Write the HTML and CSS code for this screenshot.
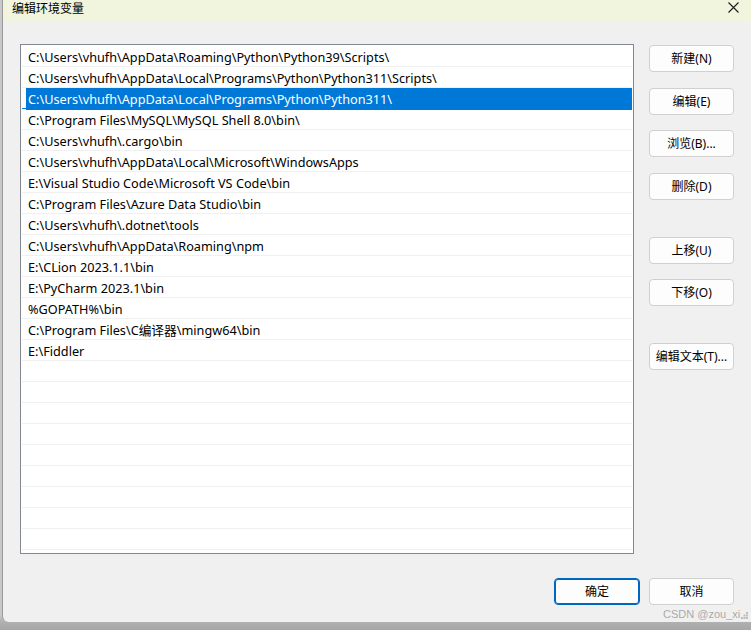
FILE: index.html
```html
<!DOCTYPE html>
<html lang="zh-CN">
<head>
<meta charset="utf-8">
<title>编辑环境变量</title>
<link rel="stylesheet" href="styles.css">
</head>
<body>
<div class="window">
  <div class="titlebar">
    <span class="title">编辑环境变量</span>
    <svg class="close" width="11" height="11" viewBox="0 0 11 11"><path d="M0.5 0.5 L10.5 10.5 M10.5 0.5 L0.5 10.5" stroke="#1a1a1a" stroke-width="1.1" fill="none"/></svg>
  </div>
  <div class="main">
    <div class="list">
      <div class="row"><span class="cell">C:\Users\vhufh\AppData\Roaming\Python\Python39\Scripts\</span></div>
      <div class="row"><span class="cell">C:\Users\vhufh\AppData\Local\Programs\Python\Python311\Scripts\</span></div>
      <div class="row selected"><span class="cell">C:\Users\vhufh\AppData\Local\Programs\Python\Python311\</span></div>
      <div class="row"><span class="cell">C:\Program Files\MySQL\MySQL Shell 8.0\bin\</span></div>
      <div class="row"><span class="cell">C:\Users\vhufh\.cargo\bin</span></div>
      <div class="row"><span class="cell">C:\Users\vhufh\AppData\Local\Microsoft\WindowsApps</span></div>
      <div class="row"><span class="cell">E:\Visual Studio Code\Microsoft VS Code\bin</span></div>
      <div class="row"><span class="cell">C:\Program Files\Azure Data Studio\bin</span></div>
      <div class="row"><span class="cell">C:\Users\vhufh\.dotnet\tools</span></div>
      <div class="row"><span class="cell">C:\Users\vhufh\AppData\Roaming\npm</span></div>
      <div class="row"><span class="cell">E:\CLion 2023.1.1\bin</span></div>
      <div class="row"><span class="cell">E:\PyCharm 2023.1\bin</span></div>
      <div class="row"><span class="cell">%GOPATH%\bin</span></div>
      <div class="row"><span class="cell">C:\Program Files\C编译器\mingw64\bin</span></div>
      <div class="row"><span class="cell">E:\Fiddler</span></div>
      <div class="row"><span class="cell"></span></div>
      <div class="row"><span class="cell"></span></div>
      <div class="row"><span class="cell"></span></div>
      <div class="row"><span class="cell"></span></div>
      <div class="row"><span class="cell"></span></div>
      <div class="row"><span class="cell"></span></div>
      <div class="row"><span class="cell"></span></div>
      <div class="row"><span class="cell"></span></div>
      <div class="row"><span class="cell"></span></div>
    </div>
    <div class="side">
      <button class="btn b-new">新建(N)</button>
      <button class="btn b-edit">编辑(E)</button>
      <button class="btn b-browse">浏览(B)...</button>
      <button class="btn b-del">删除(D)</button>
      <button class="btn b-up">上移(U)</button>
      <button class="btn b-down">下移(O)</button>
      <button class="btn b-text">编辑文本(T)...</button>
    </div>
  </div>
  <div class="footer">
    <button class="btn primary">确定</button>
    <button class="btn">取消</button>
  </div>
  <div class="watermark">CSDN @zou_xi</div>
  <svg class="grip" width="7" height="7" viewBox="0 0 7 7"><rect x="5" y="0" width="2" height="2" fill="#bdbdbd"/><rect x="2.5" y="2.5" width="2" height="2" fill="#bdbdbd"/><rect x="5" y="2.5" width="2" height="2" fill="#bdbdbd"/><rect x="0" y="5" width="2" height="2" fill="#bdbdbd"/><rect x="2.5" y="5" width="2" height="2" fill="#bdbdbd"/><rect x="5" y="5" width="2" height="2" fill="#bdbdbd"/></svg>
</div>
</body>
</html>
```

FILE: styles.css
```css
html, body {
  margin: 0;
  padding: 0;
}
body {
  width: 751px;
  height: 630px;
  overflow: hidden;
  background: linear-gradient(to bottom, #c8c8c8 0, #c8c8c8 615px, #b0b0b0 622px, #a6a6a6 630px);
  font-family: "Microsoft YaHei UI", "Segoe UI", "Noto Sans", "Noto Sans CJK SC", sans-serif;
  font-size: 12px;
  color: #000;
}
.window {
  position: relative;
  margin-left: 2px;
  width: 749px;
  height: 622px;
  background: #f0f0f0;
  border-left: 1px solid #9a9a9a;
  box-sizing: border-box;
  border-bottom-left-radius: 6px;
  display: flex;
  flex-direction: column;
}
.titlebar {
  height: 22px;
  flex: none;
  background: #f1f5de;
  display: flex;
  align-items: flex-start;
  justify-content: space-between;
  padding: 0 12px 0 9px;
}
.title {
  font-family: "Noto Sans CJK SC", sans-serif;
  font-size: 12px;
  line-height: 15px;
  white-space: nowrap;
}
.close {
  margin-top: 2px;
}
.main {
  display: flex;
  padding: 22px 15px 0 17px;
  gap: 15px;
}
.list {
  width: 614px;
  height: 510px;
  box-sizing: border-box;
  border: 1px solid #828790;
  background: #fff;
  padding: 1px 1px 0 1px;
  overflow: hidden;
  font-size: 12.7px;
}
.row {
  height: 20px;
  border-bottom: 1px solid #f0f0f0;
  display: flex;
}
.cell {
  flex: 1;
  margin-left: 4px;
  padding-left: 2px;
  padding-top: 1px;
  line-height: 20px;
  white-space: nowrap;
}
.row.selected {
  border-bottom-color: #0078d7;
}
.row.selected .cell {
  background: #0078d7;
  color: #fff;
  height: 20px;
  padding-bottom: 1px;
}
.side {
  display: flex;
  flex-direction: column;
  width: 85px;
}
.btn {
  width: 85px;
  height: 27px;
  box-sizing: border-box;
  border: 1px solid #d0d0d0;
  border-radius: 4px;
  background: #fdfdfd;
  font-family: inherit;
  font-size: 12px;
  color: #000;
  padding: 0;
  line-height: 25px;
}
.b-new { margin-top: 1px; }
.b-edit { margin-top: 16px; }
.b-browse { margin-top: 15px; }
.b-del { margin-top: 16px; }
.b-up { margin-top: 37px; }
.b-down { margin-top: 15px; }
.b-text { margin-top: 37px; }
.footer {
  display: flex;
  justify-content: flex-end;
  gap: 9px;
  padding: 24px 17px 17px 0;
}
.btn.primary {
  border: 1px solid #0067c0;
  box-shadow: inset 0 0 0 1px #0067c0;
  width: 86px;
}
.watermark {
  position: absolute;
  left: 660px;
  top: 608px;
  font-family: "Liberation Sans", Arial, sans-serif;
  font-size: 11px;
  line-height: 13px;
  white-space: nowrap;
  color: #a6a6a6;
  text-shadow: 0 0 1px #fff;
}
.grip {
  position: absolute;
  left: 738px;
  top: 612px;
}
```
